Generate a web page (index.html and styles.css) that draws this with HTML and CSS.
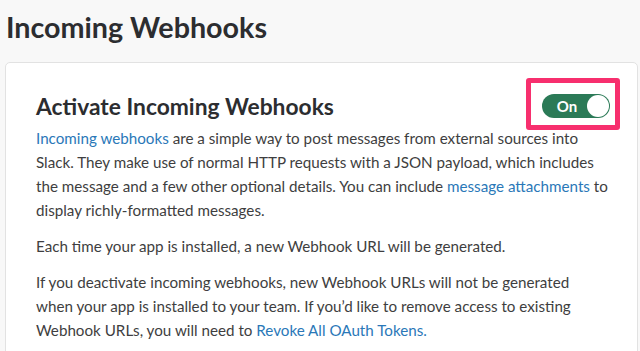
FILE: index.html
```html
<!DOCTYPE html>
<html>
  <head>
    <title>Incoming Webhooks</title>
    <link rel="stylesheet" href="styles.css">
  </head>
  <body>
    <h1 class="page-title">Incoming Webhooks</h1>
    <div class="card">
      <div class="card-header">
        <h2 class="card-title">Activate Incoming Webhooks</h2>
        <div class="toggle-wrap">
          <div class="highlight"></div>
          <div class="toggle on">
            <span class="toggle-label">On</span>
            <span class="toggle-knob"></span>
          </div>
        </div>
      </div>
      <p>
        <a href="#">Incoming webhooks</a> are a simple way to post messages from external sources into<br>
        Slack. They make use of normal HTTP requests with a JSON payload, which includes<br>
        the message and a few other optional details. You can include <a href="#">message attachments</a> to<br>
        display richly-formatted messages.
      </p>
      <p>Each time your app is installed, a new Webhook URL will be generated.</p>
      <p>
        If you deactivate incoming webhooks, new Webhook URLs will not be generated<br>
        when your app is installed to your team. If you’d like to remove access to existing<br>
        Webhook URLs, you will need to <a href="#">Revoke All OAuth Tokens.</a>
      </p>
    </div>
  </body>
</html>
```

FILE: styles.css
```css
body {
  background: #f8f8f8;
  color: #3e3e40;
  font-family: Lato, "Open Sans", sans-serif;
  margin: 0;
  overflow: hidden;
}
a {
  color: #2a78b8;
  text-decoration: none;
}
.page-title {
  font-size: 28.7px;
  font-weight: bold;
  color: #2c2d30;
  line-height: 36px;
  margin: 9px 0 0 6px;
}
.card {
  background: #fff;
  border: 1px solid #e2e2e2;
  border-radius: 5px;
  margin: 17px 2px 0 5px;
  padding: 30px 27px 30px 30px;
  min-height: 400px;
}
.card-header {
  display: flex;
  align-items: center;
  justify-content: space-between;
}
.card-title {
  font-size: 22.8px;
  font-weight: bold;
  color: #2c2d30;
  line-height: 26px;
  margin: 0;
}
.toggle-wrap {
  position: relative;
}
.highlight {
  position: absolute;
  left: -16px;
  top: -16px;
  width: 84px;
  height: 42px;
  border: 5px solid #f72f6e;
  border-radius: 3px;
}
.toggle {
  display: flex;
  align-items: center;
  width: 68px;
  height: 24px;
  border-radius: 12px;
  background: #2b7a57;
  box-sizing: border-box;
  padding: 1px;
}
.toggle-label {
  flex: 1;
  text-align: center;
  color: #fff;
  font-weight: bold;
  font-size: 15px;
  padding-left: 4px;
}
.toggle-knob {
  width: 22px;
  height: 22px;
  border-radius: 50%;
  background: #fff;
}
p {
  font-size: 15.2px;
  line-height: 24px;
  margin: 7px 0 12px 0;
}
```
